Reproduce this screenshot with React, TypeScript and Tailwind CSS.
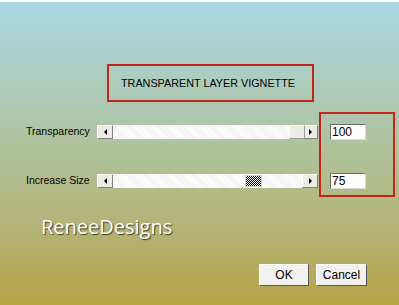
const Slider = ({ thumb, checkered }: { thumb: number; checkered?: boolean }) => {
  return (
    <div className="relative flex h-[14px] w-[221px]">
      <div className="flex w-[16px] items-center justify-center border border-t-white border-l-white border-b-[#808080] border-r-[#808080] bg-[#ecebe6]">
        <span className="h-0 w-0 border-y-[3px] border-r-[3px] border-y-transparent border-r-black" />
      </div>
      <div className="flex-1 bg-[repeating-linear-gradient(45deg,#ffffff_0px,#ffffff_1px,#f1f1f1_1px,#f1f1f1_2px)]" />
      <div className="flex w-[16px] items-center justify-center border border-t-white border-l-white border-b-[#808080] border-r-[#808080] bg-[#ecebe6]">
        <span className="h-0 w-0 border-y-[3px] border-l-[3px] border-y-transparent border-l-black" />
      </div>
      {checkered ? (
        <div
          className="absolute top-[1px] h-[12px] w-[17px] border border-[#cfcfc8] bg-[repeating-conic-gradient(#000_0_25%,#fff_0_50%)] bg-[length:2px_2px]"
          style={{ left: thumb }}
        />
      ) : (
        <div
          className="absolute top-0 h-[14px] w-[16px] border border-t-white border-l-white border-b-[#9a9a9a] border-r-[#9a9a9a] bg-[#ecebe6]"
          style={{ left: thumb }}
        />
      )}
    </div>
  );
};

const App = () => {
  return (
    <div className="relative h-[305px] w-[399px] overflow-hidden border-t-2 border-white bg-gradient-to-b from-[#a9d8e3] via-[#b0c19a] to-[#b6a446] font-['Liberation_Sans',Arial,sans-serif] text-[10.5px] text-black">
      {/* title */}
      <div className="ml-[107px] mt-[62px] flex h-[38px] w-[207px] items-center border-2 border-[#c5241b] pl-[12px] text-[10.8px]">
        TRANSPARENT LAYER VIGNETTE
      </div>

      {/* rows */}
      <div className="mt-[22px] flex flex-col gap-[33px] pl-[26px]">
        <div className="flex h-[16px] items-center">
          <span className="w-[71px]">Transparency</span>
          <Slider thumb={192} />
          <div className="ml-[12px] flex h-[16px] w-[36px] items-center border border-t-[#6b6b6b] border-l-[#6b6b6b] border-b-[#d8d8d8] border-r-[#d8d8d8] bg-white pl-[1px] text-[12px]">
            100
          </div>
        </div>
        <div className="flex h-[16px] items-center">
          <span className="w-[71px]">Increase Size</span>
          <Slider thumb={148} checkered />
          <div className="ml-[12px] flex h-[16px] w-[36px] items-center border border-t-[#6b6b6b] border-l-[#6b6b6b] border-b-[#d8d8d8] border-r-[#d8d8d8] bg-white pl-[1px] text-[12px]">
            75
          </div>
        </div>
      </div>

      {/* logo */}
      <div className="ml-[41px] mt-[24px] font-['Open_Sans',sans-serif] text-[20px] leading-[28px] text-white [text-shadow:1px_1px_1px_#3a3a2a]">
        ReneeDesigns
      </div>

      {/* buttons */}
      <div className="mt-[23px] flex gap-[7px] pl-[259px]">
        <button className="h-[22px] w-[50px] border border-t-white border-l-white border-b-[#555] border-r-[#555] bg-[#f1f1ef] text-[12px]">
          OK
        </button>
        <button className="h-[22px] w-[51px] border border-t-white border-l-white border-b-[#555] border-r-[#555] bg-[#f1f1ef] text-[12px]">
          Cancel
        </button>
      </div>

      {/* annotation box */}
      <div className="absolute left-[319px] top-[110px] h-[85px] w-[76px] border-2 border-[#c5241b]" />
    </div>
  );
};

export default App;
